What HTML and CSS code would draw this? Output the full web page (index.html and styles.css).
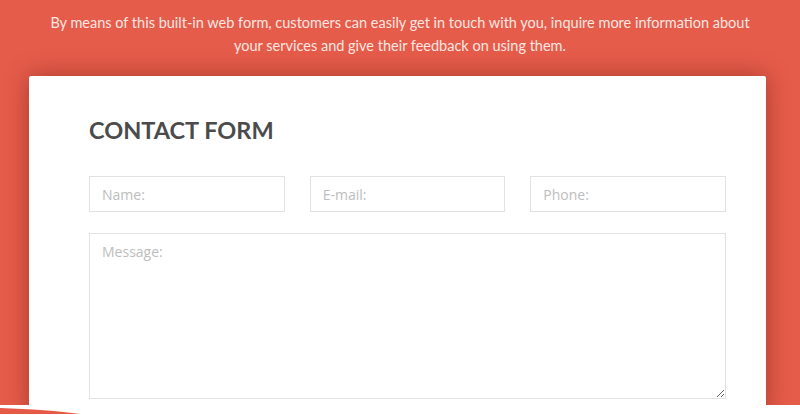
FILE: index.html
```html
<!DOCTYPE html>
<html lang="en">
<head>
    <meta charset="UTF-8">
    <meta name="viewport" content="width=device-width, initial-scale=1.0">
    <title>contact</title>
    <link rel="stylesheet" href="styles.css">
</head>
<body>
    <p class="intro">By means of this built-in web form, customers can easily get in touch with you, inquire more information about your services and give their feedback on using them.</p>
    <div class="card">
        <h2>CONTACT FORM</h2>
        <form>
            <div class="row">
                <input type="text" placeholder="Name:" name="name">
                <input type="email" placeholder="E-mail:" name="email">
                <input type="text" placeholder="Phone:" name="phone">
            </div>
            <textarea placeholder="Message:" name="message"></textarea>
        </form>
    </div>
    <svg class="wave" width="800" height="10" viewBox="0 0 800 10">
        <path d="M0 0 L0 10 L800 10 L800 0 Z" fill="#fff"/>
        <path d="M0 3 C30 4 60 6 80 9 L0 9 Z" fill="#e55a47"/>
    </svg>
</body>
</html>
```
FILE: styles.css
```css
body{
    margin: 0;
    height: 415px;
    overflow: hidden;
    position: relative;
    background: #e65c4a;
    font-family: "Open Sans", sans-serif;
}
.intro{
    margin: 11px auto 0;
    width: 714px;
    text-align: center;
    font-family: "Lato", sans-serif;
    font-size: 14.5px;
    line-height: 23px;
    color: #fde6e1;
}
.card{
    margin: 19px 34px 0 29px;
    height: 300px;
    background: #fff;
    border-radius: 2px;
    box-shadow: 0 0 24px rgba(90, 20, 10, 0.45);
    padding: 40px 40px 0 60px;
}
h2{
    margin: 0 0 32px;
    font-family: "Lato", sans-serif;
    font-size: 23.5px;
    font-weight: 700;
    color: #4b4b4b;
}
.row{
    display: grid;
    grid-template-columns: 1fr 1fr 1fr;
    gap: 25px;
    margin-bottom: 21px;
}
input, textarea{
    box-sizing: border-box;
    width: 100%;
    min-width: 0;
    border: 1px solid #e2e2e2;
    font-family: "Open Sans", sans-serif;
    font-size: 14px;
    color: #555;
    padding: 0 12px;
}
input{
    height: 36px;
}
textarea{
    display: block;
    height: 166px;
    padding-top: 8px;
    resize: vertical;
}
::placeholder{
    color: #bdbdbd;
}
.wave{
    position: absolute;
    left: 0;
    bottom: 0;
}
```
